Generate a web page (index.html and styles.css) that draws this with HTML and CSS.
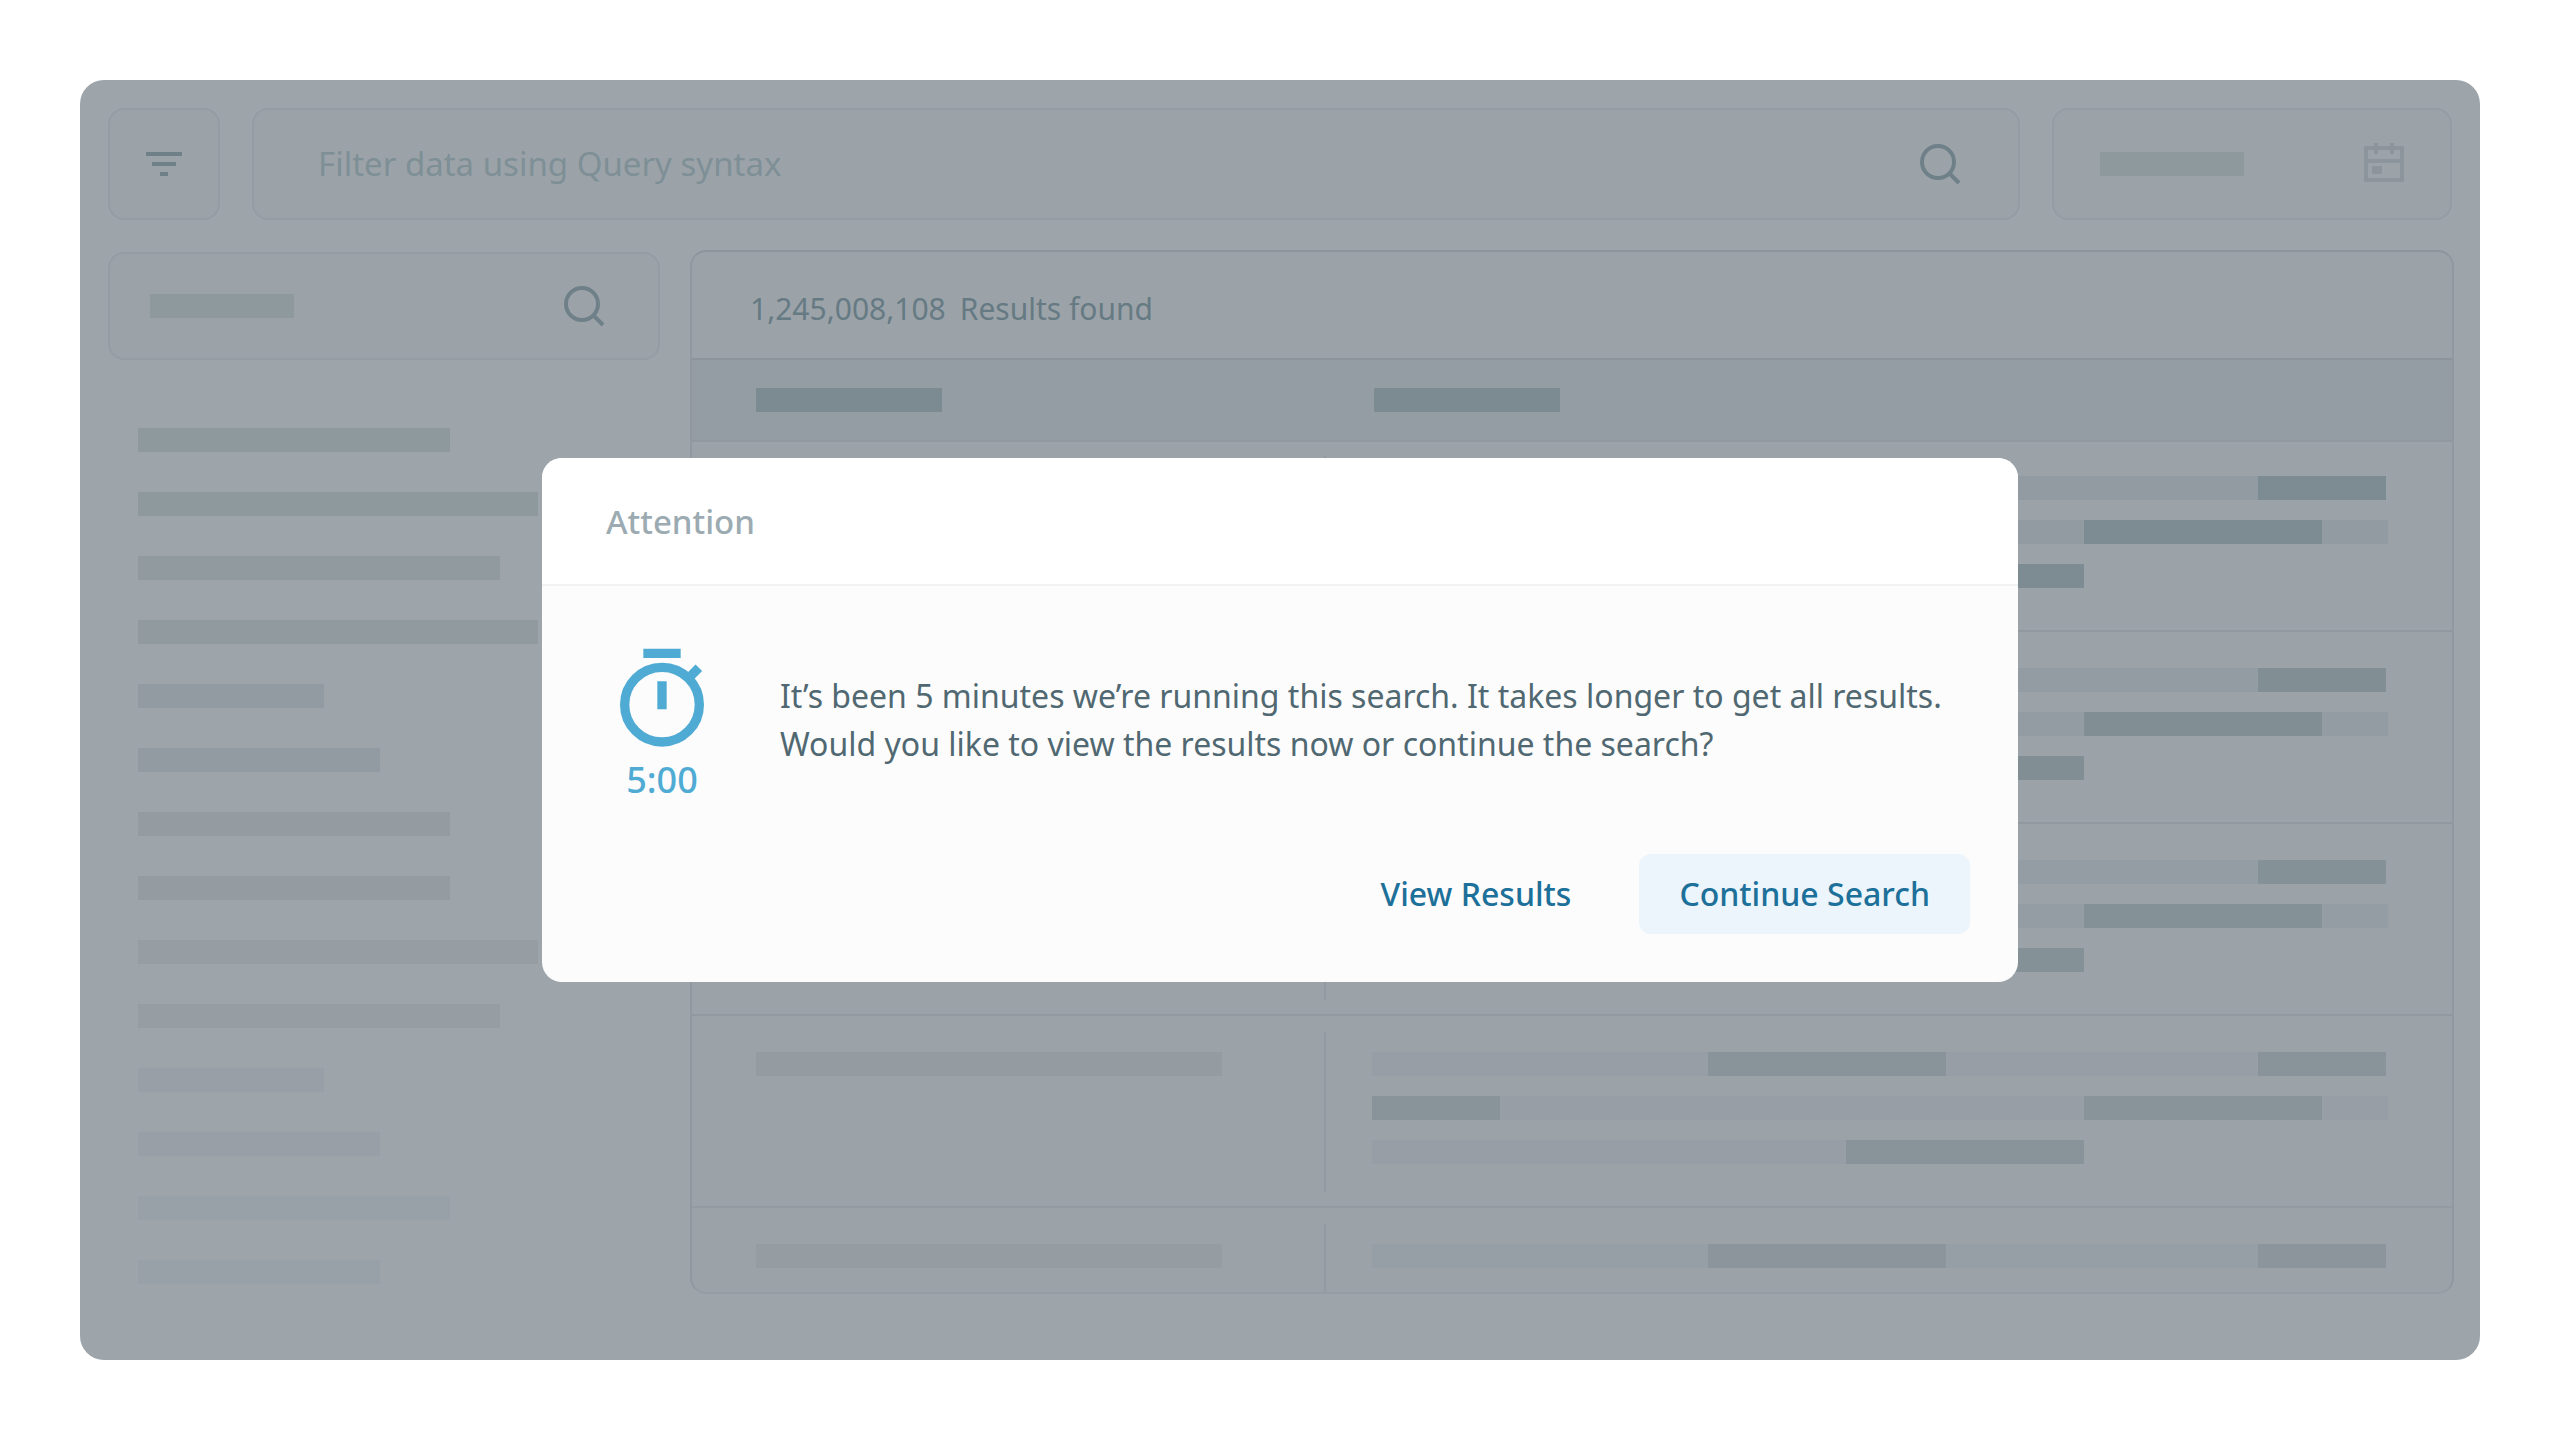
FILE: index.html
```html
<!DOCTYPE html>
<html lang="en">
<head>
<meta charset="utf-8">
<meta name="viewport" content="width=device-width, initial-scale=1">
<title>Search results</title>
<link rel="stylesheet" href="styles.css">
</head>
<body>
<main class="app">
  <header class="toolbar">
    <button class="box filter-button" type="button" aria-label="Filters">
      <svg class="icon" viewBox="0 0 40 40"><path d="M2 8h36v4H2zM8 18h24v4H8zM16 28h8v4h-8z" fill="currentColor"/></svg>
    </button>
    <form class="box query">
      <input class="query-input" type="text" placeholder="Filter data using Query syntax" aria-label="Query">
      <button class="icon-button" type="button" aria-label="Search">
        <svg class="icon" viewBox="0 0 40 40" fill="none" stroke="currentColor" stroke-width="4"><circle cx="18" cy="18" r="16"/><path d="M29 29l10 10"/></svg>
      </button>
    </form>
    <button class="box date-button" type="button" aria-label="Date range">
      <span class="bar bar-label"></span>
      <svg class="icon faint" viewBox="0 0 40 40" fill="none" stroke="currentColor" stroke-width="4"><path d="M2 4h36v32H2zM2 17h36M12 -1v11M28 -1v11"/><path d="M8 22h10v8H8z" fill="currentColor" stroke="none"/></svg>
    </button>
  </header>

  <div class="workspace">
    <aside class="sidebar">
      <button class="box field-search" type="button" aria-label="Search fields">
        <span class="bar bar-label"></span>
        <svg class="icon" viewBox="0 0 40 40" fill="none" stroke="currentColor" stroke-width="4"><circle cx="18" cy="18" r="16"/><path d="M29 29l10 10"/></svg>
      </button>
      <ul class="fields">
        <li class="bar m"></li>
        <li class="bar xl"></li>
        <li class="bar l"></li>
        <li class="bar xl"></li>
        <li class="bar xs"></li>
        <li class="bar s"></li>
        <li class="bar m"></li>
        <li class="bar m"></li>
        <li class="bar xl"></li>
        <li class="bar l"></li>
        <li class="bar xs"></li>
        <li class="bar s"></li>
        <li class="bar m"></li>
        <li class="bar s"></li>
      </ul>
    </aside>

    <section class="results">
      <h1 class="results-title"><span>1,245,008,108</span><span>Results found</span></h1>
      <table class="results-table">
        <thead>
          <tr><th class="key"><div class="bar head-bar"></div></th><th class="value"><div class="bar head-bar"></div></th></tr>
        </thead>
        <tbody>
          <tr class="row-1">
            <td class="key"><div class="bar"></div></td>
            <td class="value"><div class="lines">
              <div class="line line-a"><i></i><i class="hit"></i><i></i><i class="hit"></i></div>
              <div class="line line-b"><i class="hit"></i><i></i><i class="hit"></i><i></i></div>
              <div class="line line-c"><i></i><i class="hit"></i></div>
            </div></td>
          </tr>
          <tr class="row-2">
            <td class="key"><div class="bar"></div></td>
            <td class="value"><div class="lines">
              <div class="line line-a"><i></i><i class="hit"></i><i></i><i class="hit"></i></div>
              <div class="line line-b"><i class="hit"></i><i></i><i class="hit"></i><i></i></div>
              <div class="line line-c"><i></i><i class="hit"></i></div>
            </div></td>
          </tr>
          <tr class="row-3">
            <td class="key"><div class="bar"></div></td>
            <td class="value"><div class="lines">
              <div class="line line-a"><i></i><i class="hit"></i><i></i><i class="hit"></i></div>
              <div class="line line-b"><i class="hit"></i><i></i><i class="hit"></i><i></i></div>
              <div class="line line-c"><i></i><i class="hit"></i></div>
            </div></td>
          </tr>
          <tr class="row-4">
            <td class="key"><div class="bar"></div></td>
            <td class="value"><div class="lines">
              <div class="line line-a"><i></i><i class="hit"></i><i></i><i class="hit"></i></div>
              <div class="line line-b"><i class="hit"></i><i></i><i class="hit"></i><i></i></div>
              <div class="line line-c"><i></i><i class="hit"></i></div>
            </div></td>
          </tr>
          <tr class="row-5">
            <td class="key"><div class="bar"></div></td>
            <td class="value"><div class="lines">
              <div class="line line-a"><i></i><i class="hit"></i><i></i><i class="hit"></i></div>
            </div></td>
          </tr>
        </tbody>
      </table>
    </section>
  </div>

  <div class="overlay">
    <section class="dialog" role="dialog" aria-modal="true" aria-labelledby="dialog-title">
      <h2 class="dialog-title" id="dialog-title">Attention</h2>
      <div class="dialog-body">
        <div class="notice">
          <div class="timer">
            <svg class="timer-icon" viewBox="0 0 24 24"><path d="M8 1h8v2H8zM11 8h2v6h-2z" fill="currentColor"/><circle cx="12" cy="13" r="8" fill="none" stroke="currentColor" stroke-width="2"/><path d="M17.300 7.700l2.600-2.600" fill="none" stroke="currentColor" stroke-width="2"/></svg>
            <span>5:00</span>
          </div>
          <p class="message">It’s been 5 minutes we’re running this search. It takes longer to get all results.<br>Would you like to view the results now or continue the search?</p>
        </div>
        <div class="actions">
          <button class="button" type="button">View Results</button>
          <button class="button button-primary" type="button">Continue Search</button>
        </div>
      </div>
    </section>
  </div>
</main>
</body>
</html>
```
FILE: styles.css
```css
:root {
  --base: #9da5ab;
  --surface: #9ba3a9;
  --line: #959da4;
  --line-strong: #8d959c;
  --bar: #8e999e;
  --hit: #7f8e94;
  --ink: #6f8089;
}

* {
  box-sizing: border-box;
}

body {
  margin: 0;
  padding: 80px;
  background: #fff;
  font-family: "Noto Sans", "Open Sans", sans-serif;
  font-size: 32px;
  line-height: 48px;
}

button,
input {
  font: inherit;
  color: inherit;
  border: 0;
  background: none;
}

.app {
  position: relative;
  min-height: calc(100vh - 160px);
  padding: 28px 26px 66px 28px;
  border-radius: 24px;
  background: var(--base);
  color: var(--ink);
}

.box {
  display: flex;
  align-items: center;
  justify-content: space-between;
  border: 2px solid var(--line);
  border-radius: 16px;
  background: var(--surface);
}

.icon {
  display: block;
  overflow: visible;
  width: 40px;
  height: 40px;
}

.faint {
  color: #8b959b;
}

.bar {
  height: 24px;
  background: var(--bar);
}

.bar-label {
  width: 144px;
}

.toolbar {
  display: grid;
  grid-template-columns: 112px minmax(0, 1fr) 400px;
  gap: 32px;
  height: 112px;
  padding-right: 2px;
}

.filter-button {
  justify-content: center;
  padding: 0;
}

.query {
  padding: 0 58px 0 64px;
}

.query-input {
  flex: 1;
  min-width: 0;
  padding: 0;
  font-size: 33px;
}

.query-input::placeholder {
  color: #7e8f96;
  opacity: 1;
}

.icon-button {
  padding: 0;
}

.date-button {
  padding: 0 46px;
}

.workspace {
  display: grid;
  grid-template-columns: 552px minmax(0, 1fr);
  gap: 30px;
  margin-top: 30px;
}

.sidebar {
  padding-top: 2px;
}

.field-search {
  width: 100%;
  height: 108px;
  padding: 0 54px 0 40px;
}

.fields {
  display: flex;
  flex-direction: column;
  gap: 40px;
  margin: 68px 0 0;
  padding: 0 30px;
  list-style: none;
}

.xs { width: 186px; }
.s { width: 242px; }
.m { width: 312px; }
.l { width: 362px; }
.xl { width: 400px; }

.fields li:nth-child(n + 3) { background: #909a9f; }
.fields li:nth-child(n + 5) { background: #929ba1; }
.fields li:nth-child(n + 7) { background: #949ca2; }
.fields li:nth-child(n + 9) { background: #969ea4; }
.fields li:nth-child(n + 11) { background: #989fa6; }
.fields li:nth-child(n + 13) { background: #99a1a8; }

.results {
  overflow: hidden;
  border: 2px solid #9098a0;
  border-top-color: var(--line-strong);
  border-bottom-color: var(--line);
  border-radius: 16px;
  background: var(--surface);
}

.results-title {
  display: flex;
  align-items: center;
  gap: 14px;
  height: 108px;
  margin: 0;
  padding: 8px 58px 0;
  border-bottom: 2px solid var(--line-strong);
  color: #667a83;
  font-size: 30px;
  font-weight: 400;
}

.results-table {
  width: 100%;
  border-spacing: 0;
  table-layout: fixed;
}

th,
td {
  padding: 0;
  border-bottom: 2px solid var(--row-line, #9098a0);
  vertical-align: top;
}

th {
  height: 82px;
  padding-top: 28px;
  background: #959da4;
}

.head-bar {
  width: 186px;
  background: #7c8b91;
}

.key {
  width: 632px;
  padding-left: 64px;
}

th.value {
  padding-left: 50px;
}

td.key {
  padding-top: 36px;
  padding-right: 102px;
}

td.value {
  padding: 16px 0 14px;
}

.row-1 td.key {
  padding-top: 34px;
}

.row-1 td.value {
  padding-top: 14px;
}

.lines {
  display: flex;
  flex-direction: column;
  gap: 20px;
  height: 160px;
  padding: 20px 64px 0 46px;
  border-left: 2px solid #939ba2;
}

.line {
  display: grid;
  height: 24px;
}

.line i {
  background: var(--soft);
}

.line .hit {
  background: var(--hit);
}

.line-a { grid-template-columns: 336fr 238fr 312fr 128fr 2fr; }
.line-b { grid-template-columns: 128fr 584fr 238fr 66fr; }
.line-c { grid-template-columns: 474fr 238fr 304fr; }

.row-1 { --hit: #7d8c92; --soft: #939ba2; --bar: #8e979d; }
.row-2 { --hit: #818f95; --soft: #949ca3; --bar: #90999f; }
.row-3 { --hit: #849197; --soft: #959da4; --bar: #929aa1; --row-line: #929aa1; }
.row-4 { --hit: #88949a; --soft: #979ea5; --bar: #949ca2; --row-line: #939ba2; }
.row-5 { --hit: #8b959b; --soft: #979fa6; --bar: #959da3; }

.row-5 td {
  border-bottom: 0;
}

.row-5 td.value {
  padding-bottom: 0;
}

.row-5 .lines {
  height: 68px;
}

.overlay {
  position: absolute;
  inset: 0;
  display: grid;
  place-items: center;
}

.dialog {
  overflow: hidden;
  width: 1476px;
  max-width: 94%;
  border-radius: 20px;
  background: #fcfcfc;
}

.dialog-title {
  margin: 0;
  padding: 40px 64px 38px;
  border-bottom: 2px solid #f1f2f3;
  background: #fff;
  color: #9cabb2;
  font-size: 33px;
  font-weight: 500;
}

.dialog-body {
  padding: 58px 48px 48px 64px;
}

.notice {
  display: flex;
  gap: 62px;
}

.timer {
  display: flex;
  flex-direction: column;
  align-items: center;
  color: #4fabd3;
  font-size: 36px;
  font-weight: 500;
}

.timer-icon {
  width: 112px;
  height: 112px;
}

.message {
  margin: 0;
  padding-top: 28px;
  color: #506871;
  font-weight: 400;
}

.actions {
  display: flex;
  justify-content: flex-end;
  gap: 28px;
  margin-top: 50px;
}

.button {
  height: 80px;
  padding: 0 40px;
  border-radius: 12px;
  color: #1c7099;
  font-weight: 500;
}

.button-primary {
  background: #ebf5fb;
}
```
